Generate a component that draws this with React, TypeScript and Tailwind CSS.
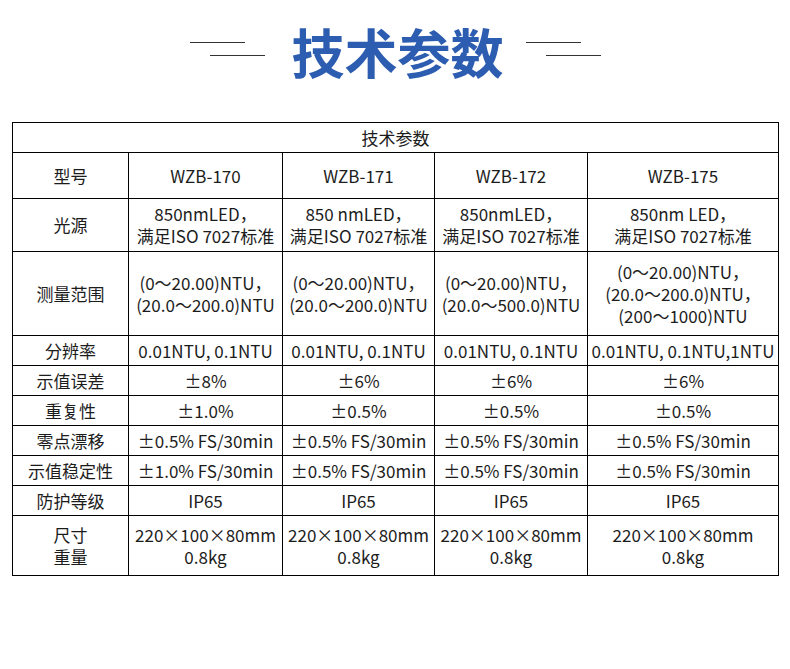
import React from 'react';

interface SpecRow {
  label: string[];
  values: string[][];
  height: string;
}

const rows: SpecRow[] = [
  { label: ['型号'], values: [['WZB-170'], ['WZB-171'], ['WZB-172'], ['WZB-175']], height: 'h-[46px]' },
  {
    label: ['光源'],
    values: [
      ['850nmLED，', '满足ISO 7027标准'],
      ['850 nmLED，', '满足ISO 7027标准'],
      ['850nmLED，', '满足ISO 7027标准'],
      ['850nm LED，', '满足ISO 7027标准'],
    ],
    height: 'h-[53px]',
  },
  {
    label: ['测量范围'],
    values: [
      ['(0～20.00)NTU，', '(20.0～200.0)NTU'],
      ['(0～20.00)NTU，', '(20.0～200.0)NTU'],
      ['(0～20.00)NTU，', '(20.0～500.0)NTU'],
      ['(0～20.00)NTU，', '(20.0～200.0)NTU，', '(200～1000)NTU'],
    ],
    height: 'h-[84px]',
  },
  {
    label: ['分辨率'],
    values: [['0.01NTU, 0.1NTU'], ['0.01NTU, 0.1NTU'], ['0.01NTU, 0.1NTU'], ['0.01NTU, 0.1NTU,1NTU']],
    height: 'h-[30px]',
  },
  { label: ['示值误差'], values: [['±8%'], ['±6%'], ['±6%'], ['±6%']], height: 'h-[30px]' },
  { label: ['重复性'], values: [['±1.0%'], ['±0.5%'], ['±0.5%'], ['±0.5%']], height: 'h-[30px]' },
  {
    label: ['零点漂移'],
    values: [['±0.5% FS/30min'], ['±0.5% FS/30min'], ['±0.5% FS/30min'], ['±0.5% FS/30min']],
    height: 'h-[30px]',
  },
  {
    label: ['示值稳定性'],
    values: [['±1.0% FS/30min'], ['±0.5% FS/30min'], ['±0.5% FS/30min'], ['±0.5% FS/30min']],
    height: 'h-[30px]',
  },
  { label: ['防护等级'], values: [['IP65'], ['IP65'], ['IP65'], ['IP65']], height: 'h-[30px]' },
  {
    label: ['尺寸', '重量'],
    values: [
      ['220×100×80mm', '0.8kg'],
      ['220×100×80mm', '0.8kg'],
      ['220×100×80mm', '0.8kg'],
      ['220×100×80mm', '0.8kg'],
    ],
    height: 'h-[60px]',
  },
];

// Two staggered strokes either side of the title
function TitleLines() {
  return (
    <div className="flex w-[75px] flex-col gap-[12px]">
      <div className="h-px w-[55px] self-start bg-[#333]" />
      <div className="h-px w-[55px] self-end bg-[#333]" />
    </div>
  );
}

function Lines({ lines }: { lines: string[] }) {
  return (
    <>
      {lines.map((line, i) => (
        <div key={i} className="whitespace-nowrap">
          {line}
        </div>
      ))}
    </>
  );
}

export default function App() {
  return (
    <div
      className="h-[669px] w-[790px] bg-white text-[#1c1c1c]"
      style={{ fontFamily: '"Noto Sans CJK JP", "Noto Sans CJK SC", sans-serif' }}
    >
      <div className="flex h-[102px] items-center justify-center">
        <div className="mr-[27px] mt-[-4px]">
          <TitleLines />
        </div>
        <h1 className="text-[53px] font-bold leading-none text-[#2d5db0]">技术参数</h1>
        <div className="ml-[22px] mt-[-4px]">
          <TitleLines />
        </div>
      </div>

      <table className="ml-[12px] mt-[20px] w-[766px] table-fixed border-collapse text-center text-[17px] leading-[22px]">
        <colgroup>
          <col className="w-[116px]" />
          <col className="w-[154px]" />
          <col className="w-[152px]" />
          <col className="w-[153px]" />
          <col className="w-[191px]" />
        </colgroup>
        <tbody>
          <tr className="h-[30px]">
            <td colSpan={5} className="border border-black align-middle">
              技术参数
            </td>
          </tr>
          {rows.map(row => (
            <tr key={row.label.join('')} className={row.height}>
              <td className="border border-black px-0.5 align-middle">
                <Lines lines={row.label} />
              </td>
              {row.values.map((v, i) => (
                <td key={i} className="border border-black px-0.5 align-middle">
                  <Lines lines={v} />
                </td>
              ))}
            </tr>
          ))}
        </tbody>
      </table>
    </div>
  );
}
